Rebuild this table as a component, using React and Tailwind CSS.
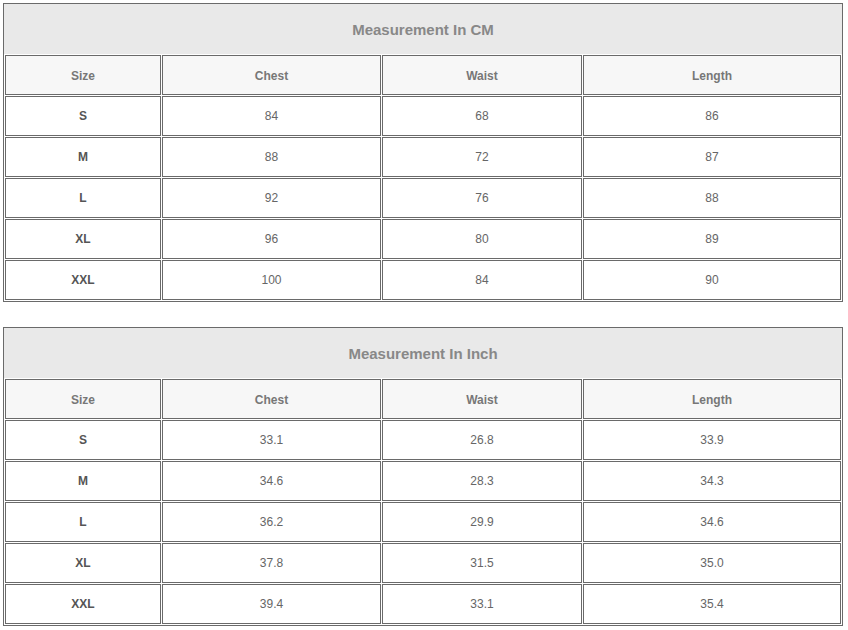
import React from 'react';

const cmRows = [
  ['S', '84', '68', '86'],
  ['M', '88', '72', '87'],
  ['L', '92', '76', '88'],
  ['XL', '96', '80', '89'],
  ['XXL', '100', '84', '90'],
];

const inchRows = [
  ['S', '33.1', '26.8', '33.9'],
  ['M', '34.6', '28.3', '34.3'],
  ['L', '36.2', '29.9', '34.6'],
  ['XL', '37.8', '31.5', '35.0'],
  ['XXL', '39.4', '33.1', '35.4'],
];

const widths = ['w-[156px]', 'w-[219px]', 'w-[200px]', 'w-[258px]'];

function SizeTable({ title, rows }) {
  return (
    <div className="ml-[3px] w-[840px] border border-[#6a6a6a] bg-white">
      <div className="h-[50px] pt-[2px] bg-[#e9e9e9] flex items-center justify-center text-[15px] font-bold text-[#888]">
        {title}
      </div>
      <table className="w-full border-separate border-spacing-[1px] table-fixed text-[12px] text-[#666]">
        <thead>
          <tr>
            {['Size', 'Chest', 'Waist', 'Length'].map((h, i) => (
              <th
                key={h}
                className={`${widths[i]} h-[40px] p-0 pt-[1px] border border-[#6a6a6a] bg-[#f7f7f7] font-bold text-[#777] text-center`}
              >
                {h}
              </th>
            ))}
          </tr>
        </thead>
        <tbody>
          {rows.map((row) => (
            <tr key={row[0]}>
              {row.map((cell, i) => (
                <td
                  key={i}
                  className={`h-[40px] p-0 border border-[#6a6a6a] text-center ${i === 0 ? 'font-bold text-[#555]' : ''}`}
                >
                  {cell}
                </td>
              ))}
            </tr>
          ))}
        </tbody>
      </table>
    </div>
  );
}

export default function App() {
  return (
    <div className="w-[848px] h-[630px] bg-white pt-[3px] font-['Liberation_Sans',Arial,sans-serif]">
      <SizeTable title="Measurement In CM" rows={cmRows} />
      <div className="h-[25px]" />
      <SizeTable title="Measurement In Inch" rows={inchRows} />
    </div>
  );
}
